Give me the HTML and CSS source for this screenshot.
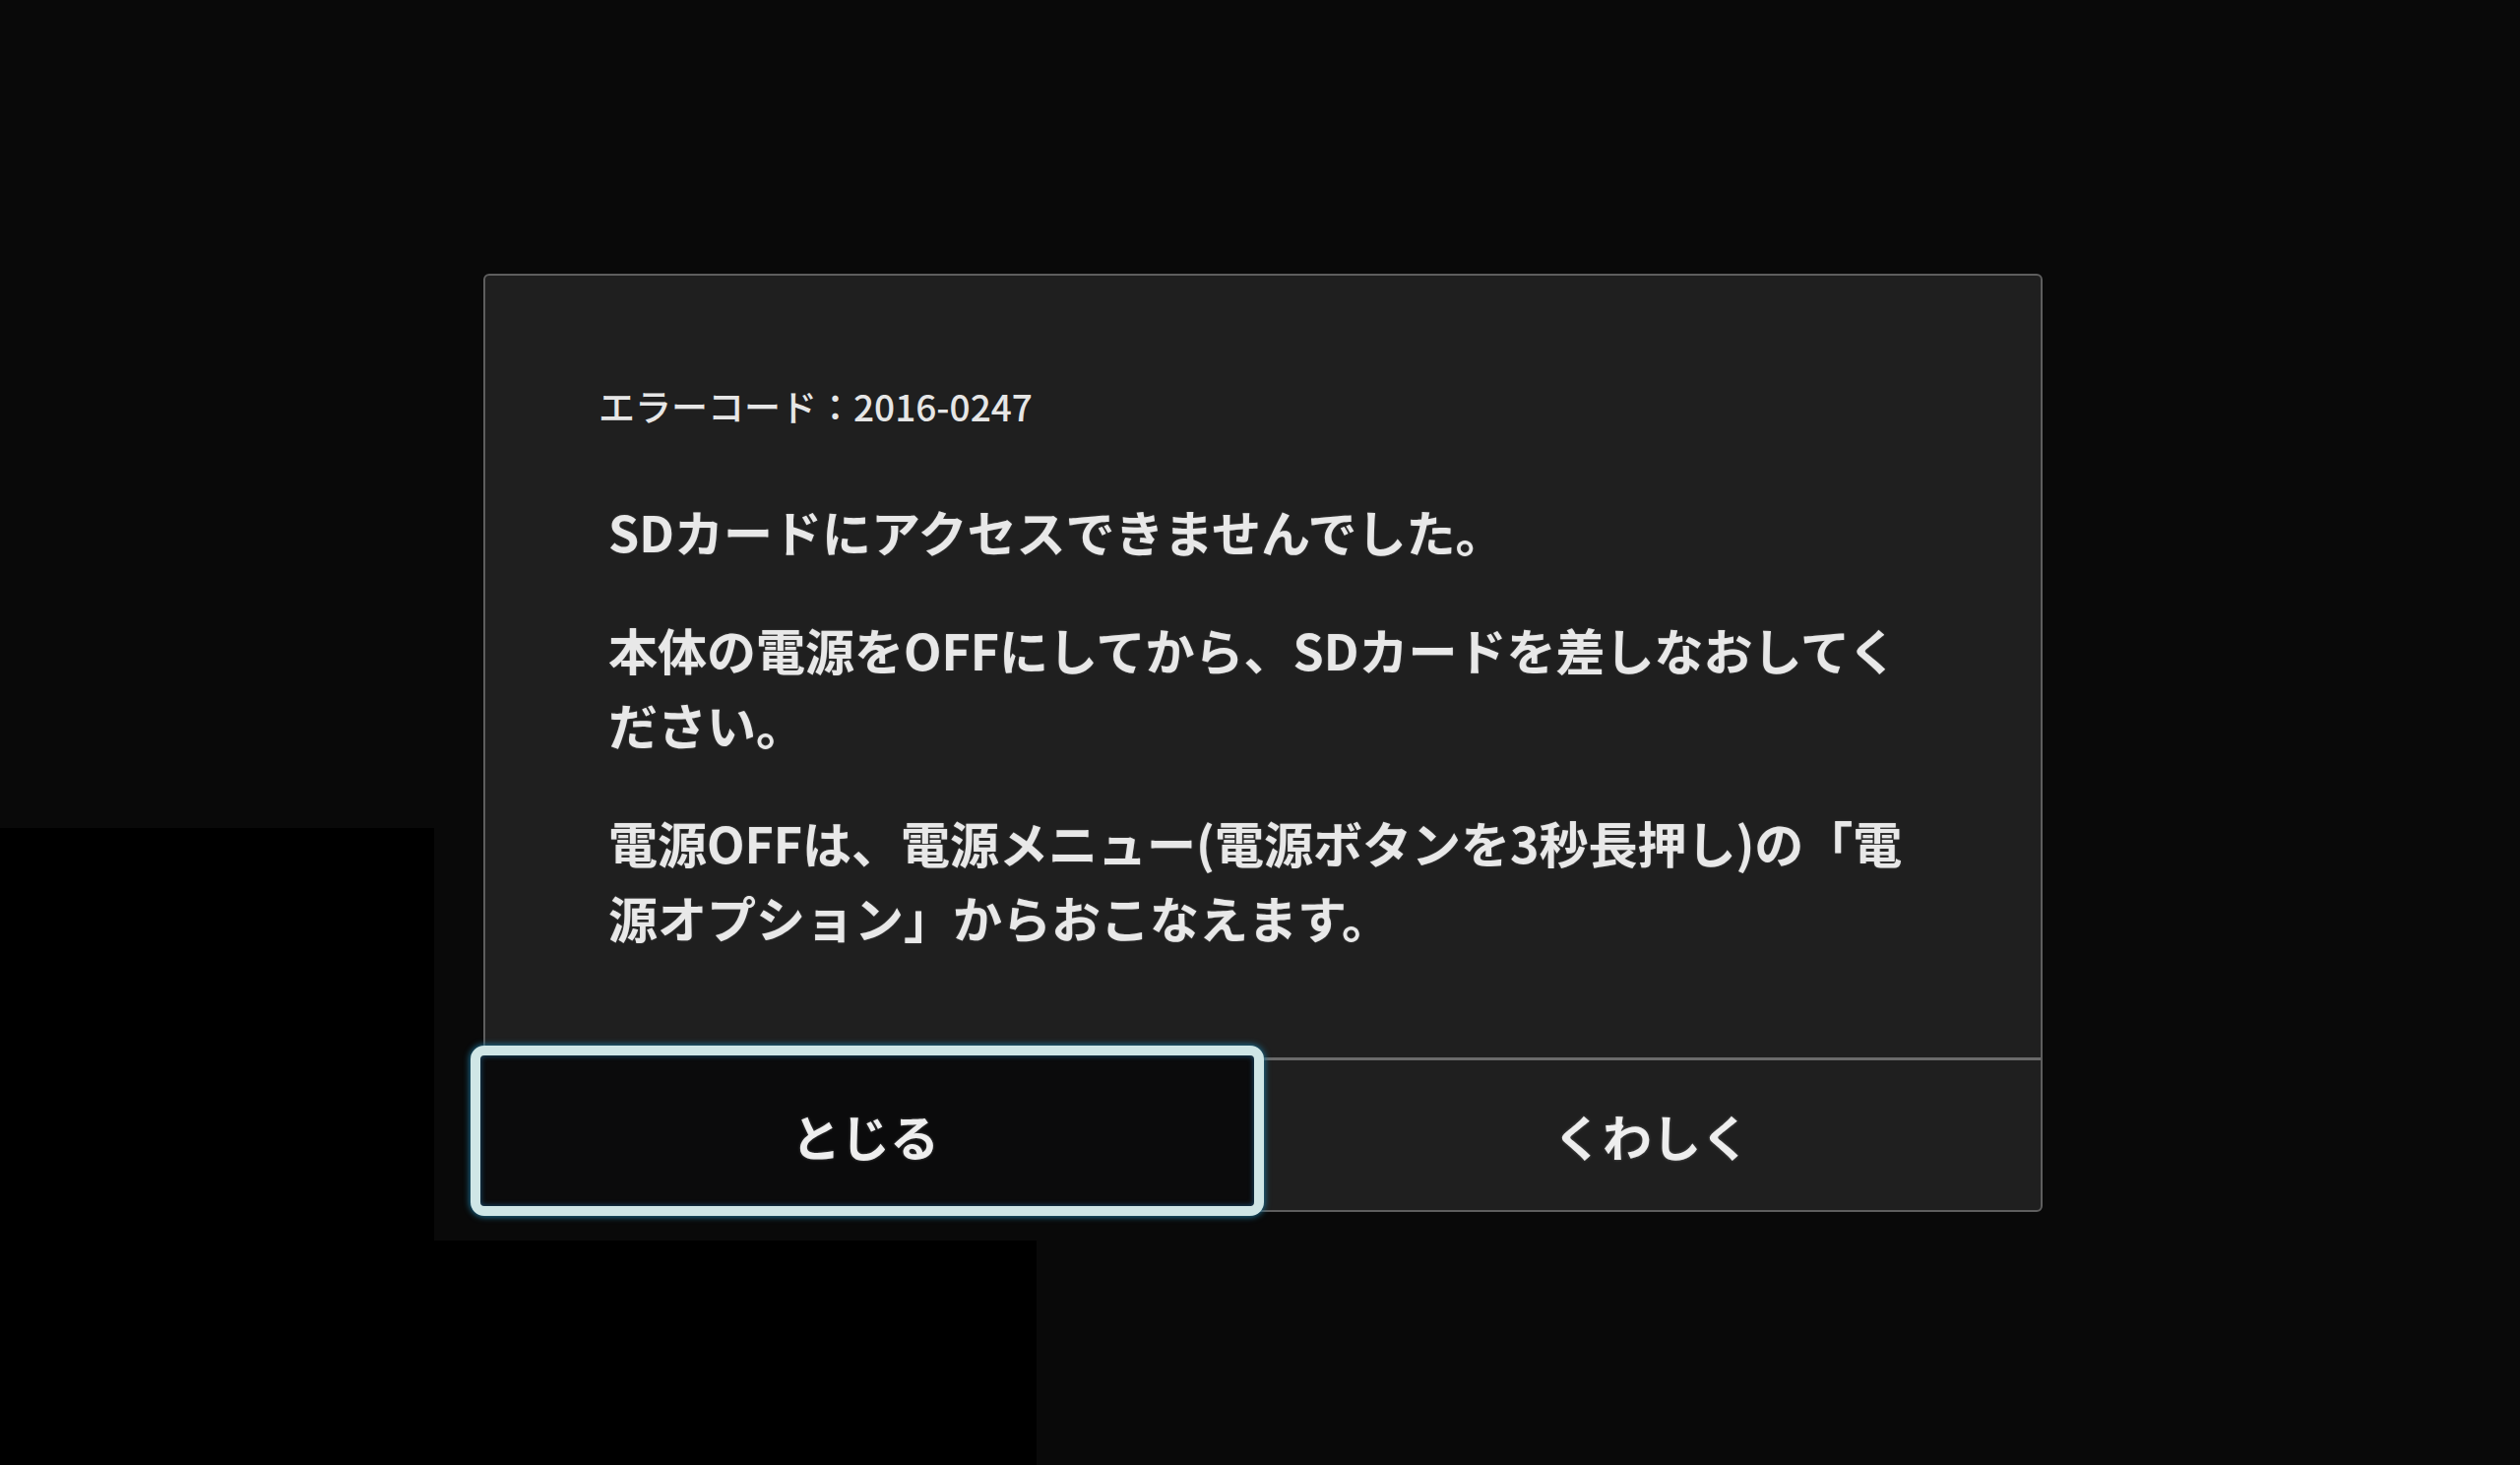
FILE: index.html
```html
<!DOCTYPE html>
<html lang="ja">
<head>
<meta charset="utf-8">
<title>エラー</title>
<link rel="stylesheet" href="styles.css">
</head>
<body>
  <div class="dialog">
    <div class="content">
      <p class="code">エラーコード：2016-0247</p>
      <p class="msg">SDカードにアクセスできませんでした。</p>
      <p class="msg">本体の電源をOFFにしてから、SDカードを差しなおしてく<br>ださい。</p>
      <p class="msg">電源OFFは、電源メニュー(電源ボタンを3秒長押し)の「電<br>源オプション」からおこなえます。</p>
    </div>
    <div class="actions">
      <div class="btn focused"><span class="label">とじる</span></div>
      <div class="btn"><span class="label">くわしく</span></div>
    </div>
  </div>
</body>
</html>
```

FILE: styles.css
```css
html, body {
  margin: 0;
  padding: 0;
}

body {
  width: 2560px;
  height: 1488px;
  box-sizing: border-box;
  padding-top: 278px;
  display: flex;
  justify-content: center;
  align-items: flex-start;
  font-family: "Noto Sans CJK JP", "Noto Sans", sans-serif;
  color: #ebebeb;
  background:
    linear-gradient(#000, #000) 0 841px / 441px 647px no-repeat,
    linear-gradient(#000, #000) 0 1260px / 1053px 228px no-repeat,
    #090909;
}

.dialog {
  width: 1584px;
  margin-left: 6px;
  box-sizing: border-box;
  background: #1f1f1f;
  border: 2px solid #5e5e5e;
  border-radius: 6px;
  display: flex;
  flex-direction: column;
}

.content {
  padding: 106px 125px 105px;
}

.content p {
  margin: 0;
  white-space: nowrap;
}

.code {
  font-size: 37px;
  line-height: 52px;
  font-weight: 500;
  margin-bottom: 63px !important;
  margin-left: -10px !important;
  color: #e6e6e6;
}

.msg {
  font-size: 50px;
  line-height: 76px;
  font-weight: 700;
  color: #e8e8e8;
  text-shadow: 0 0 2px rgba(255, 255, 255, 0.25);
}

.msg + .msg {
  margin-top: 44px;
}

.actions {
  display: flex;
  border-top: 3px solid #6a6a6a;
  height: 152px;
}

.btn {
  flex: 1;
  position: relative;
  display: flex;
  align-items: center;
  justify-content: center;
  font-size: 50px;
  font-weight: 700;
  color: #eeeeee;
}

.label {
  position: relative;
  z-index: 2;
  text-shadow: 0 0 3px rgba(255, 255, 255, 0.3);
}

.focused::after {
  content: "";
  position: absolute;
  top: -15px;
  left: -15px;
  right: -1px;
  bottom: -6px;
  border: 10px solid #cfe6e6;
  border-radius: 14px;
  background: #0b0b0c;
  box-shadow: 0 0 6px 1px #1c6f92, inset 0 0 5px 1px #16415e;
  z-index: 1;
}

.focused .label {
  margin-left: -18px;
}
```
